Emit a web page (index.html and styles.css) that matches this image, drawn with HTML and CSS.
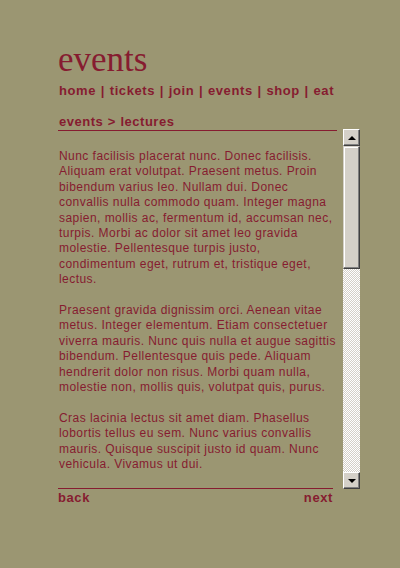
FILE: index.html
```html
<!DOCTYPE html>
<html>
<head>
<meta charset="utf-8">
<link rel="stylesheet" href="styles.css">
</head>
<body>
<div class="page">
  <h1 class="title">events</h1>
  <nav class="nav">home | tickets | join | events | shop | eat</nav>
  <div class="crumb">events &gt; lectures</div>
  <div class="box">
    <div class="content">
      <p>Nunc facilisis placerat nunc. Donec facilisis. Aliquam erat volutpat. Praesent metus. Proin bibendum varius leo. Nullam dui. Donec convallis nulla commodo quam. Integer magna sapien, mollis ac, fermentum id, accumsan nec, turpis. Morbi ac dolor sit amet leo gravida molestie. Pellentesque turpis justo, condimentum eget, rutrum et, tristique eget, lectus.</p>
      <p>Praesent gravida dignissim orci. Aenean vitae metus. Integer elementum. Etiam consectetuer viverra mauris. Nunc quis nulla et augue sagittis bibendum. Pellentesque quis pede. Aliquam hendrerit dolor non risus. Morbi quam nulla, molestie non, mollis quis, volutpat quis, purus.</p>
      <p>Cras lacinia lectus sit amet diam. Phasellus lobortis tellus eu sem. Nunc varius convallis mauris. Quisque suscipit justo id quam. Nunc vehicula. Vivamus ut dui.</p>
    </div>
    <div class="scrollbar">
      <div class="btn"><span class="arrow up"></span></div>
      <div class="thumb"></div>
      <div class="track"></div>
      <div class="btn"><span class="arrow down"></span></div>
    </div>
  </div>
  <div class="footer">
    <span>back</span>
    <span>next</span>
  </div>
</div>
</body>
</html>
```
FILE: styles.css
```css
html, body {
  margin: 0;
  padding: 0;
  background: #9b9672;
}
.page {
  padding: 40px 0 0 58px;
  width: 302px;
  color: #861c30;
  font-family: "Liberation Sans", Arial, sans-serif;
}
.title {
  margin: 0;
  font-family: "Liberation Serif", "Times New Roman", serif;
  font-weight: normal;
  font-size: 35px;
  line-height: 40px;
  height: 42px;
}
.nav {
  font-weight: bold;
  font-size: 13px;
  line-height: 16px;
  padding-left: 1px;
  letter-spacing: 0.6px;
  word-spacing: 0.5px;
  margin-top: 1px;
}
.crumb {
  margin-top: 15px;
  width: 278px;
  font-weight: bold;
  font-size: 13px;
  line-height: 16px;
  padding-left: 1px;
  letter-spacing: 0.5px;
  word-spacing: 0.5px;
  border-bottom: 1px solid #861c30;
}
.box {
  display: flex;
  height: 360px;
  margin-top: -2px;
}
.content {
  flex: 1;
  overflow: hidden;
  padding: 20px 4px 0 1px;
  font-size: 12px;
  line-height: 15.4px;
  letter-spacing: 0.45px;
}
.content p {
  margin: 0 0 15.4px 0;
}
.scrollbar {
  width: 17px;
  display: flex;
  flex-direction: column;
}
.btn {
  height: 17px;
  box-sizing: border-box;
  background: #d4d0c8;
  border-top: 1px solid #ffffff;
  border-left: 1px solid #ffffff;
  border-right: 1px solid #404040;
  border-bottom: 1px solid #404040;
  box-shadow: inset -1px -1px 0 #808080, inset 1px 1px 0 #d4d0c8;
  display: flex;
  align-items: center;
  justify-content: center;
}
.arrow {
  width: 0;
  height: 0;
  border-left: 4px solid transparent;
  border-right: 4px solid transparent;
}
.arrow.up {
  border-bottom: 4px solid #000;
}
.arrow.down {
  border-top: 4px solid #000;
}
.thumb {
  height: 123px;
  box-sizing: border-box;
  background: #d4d0c8;
  border-top: 1px solid #d4d0c8;
  border-left: 1px solid #d4d0c8;
  border-right: 1px solid #404040;
  border-bottom: 1px solid #404040;
  box-shadow: inset -1px -1px 0 #808080, inset 1px 1px 0 #ffffff;
}
.track {
  flex: 1;
  background-color: #ffffff;
  background-image: repeating-conic-gradient(#d4d0c8 0 25%, #ffffff 0 50%);
  background-size: 2px 2px;
}
.footer {
  display: flex;
  justify-content: space-between;
  width: 275px;
  border-top: 1px solid #861c30;
  margin-top: -1px;
  padding-top: 1px;
  font-weight: bold;
  font-size: 13px;
  line-height: 16px;
  letter-spacing: 0.6px;
}
```
